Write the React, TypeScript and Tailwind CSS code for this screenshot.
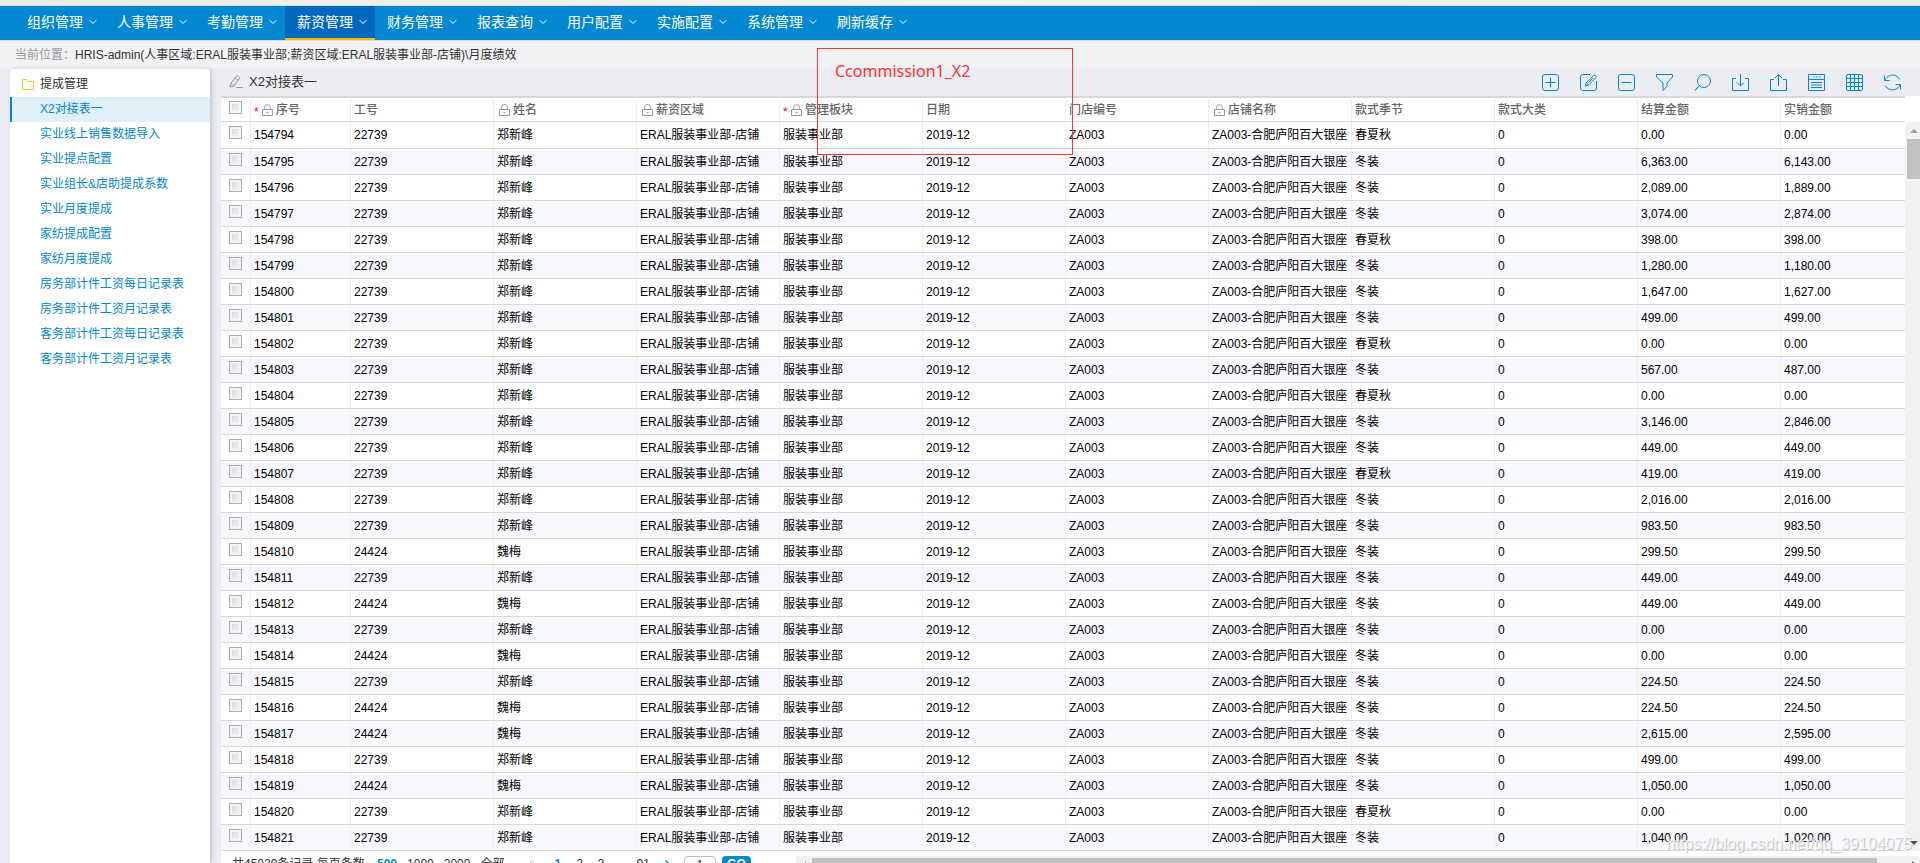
import React from 'react';
import { ChevronDown } from 'lucide-react';

const menus = ['组织管理', '人事管理', '考勤管理', '薪资管理', '财务管理', '报表查询', '用户配置', '实施配置', '系统管理', '刷新缓存'];

const sideItems = [
  'X2对接表一',
  '实业线上销售数据导入',
  '实业提点配置',
  '实业组长&店助提成系数',
  '实业月度提成',
  '家纺提成配置',
  '家纺月度提成',
  '房务部计件工资每日记录表',
  '房务部计件工资月记录表',
  '客务部计件工资每日记录表',
  '客务部计件工资月记录表',
];

const columns = [
  { title: '序号', required: true, locked: true },
  { title: '工号' },
  { title: '姓名', locked: true },
  { title: '薪资区域', locked: true },
  { title: '管理板块', required: true, locked: true },
  { title: '日期' },
  { title: '门店编号' },
  { title: '店铺名称', locked: true },
  { title: '款式季节' },
  { title: '款式大类' },
  { title: '结算金额' },
  { title: '实销金额' },
];

const people: Record<string, string> = { '22739': '郑新峰', '24424': '魏梅' };

// [工号, 款式季节, 结算金额, 实销金额]
const records = [
  ['22739', '春夏秋', '0.00', '0.00'],
  ['22739', '冬装', '6,363.00', '6,143.00'],
  ['22739', '冬装', '2,089.00', '1,889.00'],
  ['22739', '冬装', '3,074.00', '2,874.00'],
  ['22739', '春夏秋', '398.00', '398.00'],
  ['22739', '冬装', '1,280.00', '1,180.00'],
  ['22739', '冬装', '1,647.00', '1,627.00'],
  ['22739', '冬装', '499.00', '499.00'],
  ['22739', '春夏秋', '0.00', '0.00'],
  ['22739', '冬装', '567.00', '487.00'],
  ['22739', '春夏秋', '0.00', '0.00'],
  ['22739', '冬装', '3,146.00', '2,846.00'],
  ['22739', '冬装', '449.00', '449.00'],
  ['22739', '春夏秋', '419.00', '419.00'],
  ['22739', '冬装', '2,016.00', '2,016.00'],
  ['22739', '冬装', '983.50', '983.50'],
  ['24424', '冬装', '299.50', '299.50'],
  ['22739', '冬装', '449.00', '449.00'],
  ['24424', '冬装', '449.00', '449.00'],
  ['22739', '冬装', '0.00', '0.00'],
  ['24424', '冬装', '0.00', '0.00'],
  ['22739', '冬装', '224.50', '224.50'],
  ['24424', '冬装', '224.50', '224.50'],
  ['24424', '冬装', '2,615.00', '2,595.00'],
  ['22739', '冬装', '499.00', '499.00'],
  ['24424', '冬装', '1,050.00', '1,050.00'],
  ['22739', '春夏秋', '0.00', '0.00'],
  ['22739', '冬装', '1,040.00', '1,020.00'],
];

const tools = [
  { label: '新增', d: 'M3 .5h11a2.5 2.5 0 0 1 2.5 2.5v11a2.5 2.5 0 0 1-2.5 2.5H3A2.5 2.5 0 0 1 .5 14V3A2.5 2.5 0 0 1 3 .5zM8.5 3.5v10M3.5 8.5h10' },
  { label: '编辑', d: 'M10 .5H3A2.5 2.5 0 0 0 .5 3v11A2.5 2.5 0 0 0 3 16.5h11a2.5 2.5 0 0 0 2.5-2.5V7M5.5 12l.8-3.4 7.2-7.2q1.2-.9 2.2.1t.2 2.2l-7.2 7.2zM6.3 8.6l2.4 2.3M8.5 8.5l4.5-4.5' },
  { label: '删除', d: 'M3 .5h11a2.5 2.5 0 0 1 2.5 2.5v11a2.5 2.5 0 0 1-2.5 2.5H3A2.5 2.5 0 0 1 .5 14V3A2.5 2.5 0 0 1 3 .5zM3.5 8.5h10' },
  { label: '筛选', d: 'M.5 .5h16v2.500l-5.500 6v3.500l-4 4V9L.5 3z' },
  { label: '查询', d: 'M10 .5a6.500 6.500 0 1 1 0 13a6.500 6.500 0 0 1 0-13zM5.200 11.500L1 16.500M4.500 13L1.500 15.500' },
  { label: '导入', d: 'M4 4.500H.5v12h16v-12H13M8.500 0v12M5 8.500l3.500 3.500 3.500-3.500' },
  { label: '导出', d: 'M4 5.500H.5v11h16v-11H13M8.500 12V.5M5 4l3.500-3.500L12 4' },
  { label: '明细', d: 'M.5 .5h16v16H.5zM.5 5.500h16M3 8.500h11M3 11h11M3 13.500h11M5 3h1.500M8 3h1.500M11 3h1.500' },
  { label: '列表', d: 'M2 .5h13a1.500 1.500 0 0 1 1.500 1.500v13a1.500 1.500 0 0 1-1.500 1.500H2A1.500 1.500 0 0 1 .5 15V2A1.500 1.500 0 0 1 2 .5zM4.500 .5v16M8.500 .5v16M12.500 .5v16M.5 4.500h16M.5 8.500h16M.5 12.500h16' },
  { label: '刷新', d: 'M.5 1.500v5h5M.8 6.200C3 1.500 8 0 12 1.800q2.500 1.200 3.800 3.700M16.500 15.500v-5h-5M16.200 10.800C14 15.500 9 17 5 15.200Q2.500 14 1.200 11.500' },
];

const checkboxClass =
  'block size-[13px] appearance-none border border-[#acacac] bg-gradient-to-br from-[#d3d6da] to-[#f8f8f8] shadow-[inset_0_0_0_2px_#f4f4f4]';

function LockIcon() {
  return (
    <svg className="h-3 w-[11px] shrink-0" viewBox="0 0 11 12" fill="none" stroke="#999" aria-hidden="true">
      <path d="M.5 5.500h10v6H.5zM2.500 5.500V3.500q0-3 3-3t3 3v2M4.500 8.500h2" />
    </svg>
  );
}

function TopMenu() {
  return (
    <nav className="flex h-9 shrink-0 border-y border-[#d5dfe4] bg-[#0288d1] px-[15px]">
      {menus.map((name) => (
        <button
          key={name}
          className={`flex w-[90px] items-center gap-1 pl-3 text-sm whitespace-nowrap text-white ${
            name === '薪资管理' ? 'border-b-2 border-[#ffb900] bg-[#0068bf]' : 'pb-0.5'
          }`}
        >
          {name}
          <ChevronDown className="size-3 shrink-0" strokeWidth={2} />
        </button>
      ))}
    </nav>
  );
}

function Sidebar() {
  return (
    <aside className="mt-px w-[200px] shrink-0 rounded-t bg-white shadow-[2px_0_5px_#c4c6d2]">
      <h2 className="flex h-7 items-center gap-1.5 pt-0.5 pl-3 text-[#333]">
        <svg className="size-3" viewBox="0 0 12 12" fill="none" stroke="#fbc02d" aria-hidden="true">
          <path d="M.5 1.500h4l1.500 2h5.500v8H.5z" />
        </svg>
        提成管理
      </h2>
      <ul>
        {sideItems.map((item, i) => (
          <li key={item}>
            <a
              href="#"
              className={`flex h-[25px] items-center border-l-2 pb-0.5 pl-7 text-[#0288d1] ${
                i === 0 ? 'border-[#0288d1] bg-[#dff0f9]' : 'border-transparent'
              }`}
            >
              {item}
            </a>
          </li>
        ))}
      </ul>
    </aside>
  );
}

function Toolbar() {
  return (
    <div className="flex h-7 shrink-0 items-center justify-between pr-[19px] pl-2">
      <h1 className="flex items-center gap-1.5 text-[13px] text-[#333]">
        <svg className="h-[13px] w-3.5" viewBox="0 0 14 13" fill="none" stroke="#999" aria-hidden="true">
          <path d="M1 12l.8-3.500L7 1.500q1.500-1.500 2.800 0t.2 2.500l-5 7zM2 8.500l2.800 2.200M6 3l3 2M7 12.500h7" />
        </svg>
        X2对接表一
      </h1>
      <div className="flex gap-[21px]">
        {tools.map((tool) => (
          <button key={tool.label} aria-label={tool.label}>
            <svg className="size-[17px]" viewBox="0 0 17 17" fill="none" stroke="#0288d1">
              <path d={tool.d} />
            </svg>
          </button>
        ))}
      </div>
    </div>
  );
}

function Grid() {
  return (
    <div className="flex shrink-0 bg-white">
      <table className="flex-1 table-fixed border-separate border-spacing-0">
        <colgroup>
          <col className="w-[30px]" />
          <col className="w-[100px]" />
          {columns.slice(1, -1).map((col) => (
            <col key={col.title} className="w-[143px]" />
          ))}
          <col />
        </colgroup>
        <thead>
          <tr className="h-[26px] text-[#666]">
            <th className="border-t-2 border-r border-b border-t-[#d8d8d8] border-r-[#eee] border-b-[#d8d8d8] p-0 pt-[3px] pl-2 align-top">
              <input type="checkbox" aria-label="全选" className={checkboxClass} />
            </th>
            {columns.map((col) => (
              <th
                key={col.title}
                className="border-t-2 border-r border-b border-t-[#d8d8d8] border-r-[#eee] border-b-[#d8d8d8] p-0 pl-[3px] text-left font-medium last:border-r-0"
              >
                <span className={`flex items-center gap-[3px] ${col.locked && !col.required ? 'pl-0.5' : ''}`}>
                  {(col.required || col.locked) && (
                    <span className="flex items-center gap-0.5">
                      {col.required && <span className="h-3 w-1.5 leading-4 text-[#f00]">*</span>}
                      {col.locked && <LockIcon />}
                    </span>
                  )}
                  {col.title}
                </span>
              </th>
            ))}
          </tr>
        </thead>
        <tbody>
          {records.map(([jobNo, season, settled, sold], i) => {
            const id = String(154794 + i);
            const cells = [
              id, jobNo, people[jobNo], 'ERAL服装事业部-店铺', '服装事业部', '2019-12', 'ZA003',
              'ZA003-合肥庐阳百大银座', season, '0', settled, sold,
            ];
            return (
              <tr key={id} className="h-[26px] text-black first:h-[27px] even:bg-[#f7f8fd]">
                <td className="border-r border-b border-r-[#eee] border-b-[#d8d8d8] p-0 pt-1 pl-2 align-top">
                  <input type="checkbox" aria-label={`选择 ${id}`} className={checkboxClass} />
                </td>
                {cells.map((cell, c) => (
                  <td
                    key={c}
                    className="overflow-hidden border-r border-b border-r-[#eee] border-b-[#d8d8d8] p-0 pl-[3px] whitespace-nowrap last:border-r-0"
                  >
                    {cell}
                  </td>
                ))}
              </tr>
            );
          })}
        </tbody>
      </table>
      {/* vertical scrollbar */}
      <div className="flex w-[15px] shrink-0 flex-col pt-[26px]">
        <div className="flex flex-1 flex-col items-center bg-[#f1f1f1] pl-0.5">
          <svg className="mt-[7px] mb-1.5 h-1 w-2" viewBox="0 0 8 4" fill="#a3a3a3" aria-hidden="true"><path d="M0 4l4-4 4 4z" /></svg>
          <div className="h-10 w-full bg-[#c1c1c1]" />
          <svg className="mt-auto mb-1.5 h-1 w-2" viewBox="0 0 8 4" fill="#505050" aria-hidden="true"><path d="M0 0l4 4 4-4z" /></svg>
        </div>
      </div>
    </div>
  );
}

function Pager() {
  return (
    <footer className="flex h-7 shrink-0 items-start bg-white pt-[5px] leading-4 text-[#333]">
      <div className="flex w-[575px] shrink-0 items-start whitespace-nowrap">
        <span className="w-[156px] pl-[11px]">共45029条记录&nbsp;每页条数</span>
        <div className="flex gap-2.5">
          <a href="#" className="font-bold text-[#0288d1]">500</a>
          <a href="#">1000</a>
          <a href="#">2000</a>
          <a href="#">全部</a>
        </div>
        <div className="flex items-start gap-[15px] pl-6">
          <a href="#" aria-label="上一页" className="mr-1.5 pt-1">
            <svg className="h-2 w-[5px]" viewBox="0 0 5 8" fill="none" stroke="#aaa"><path d="M4.500 .5L1 4l3.500 3.500" /></svg>
          </a>
          <a href="#" className="font-bold text-[#0288d1]">1</a>
          <a href="#">2</a>
          <a href="#">3</a>
          <span className="-mr-2">...</span>
          <a href="#">91</a>
          <a href="#" aria-label="下一页" className="pt-1">
            <svg className="h-2 w-[5px]" viewBox="0 0 5 8" fill="none" stroke="#0288d1" strokeWidth="1.5"><path d="M.5 .5L4 4 .5 7.500" /></svg>
          </a>
        </div>
        <input aria-label="页码" defaultValue="1" className="ml-3.5 h-[18px] w-8 rounded-sm border border-[#bbb] bg-white text-center" />
        <button className="ml-1.5 h-[18px] w-[29px] rounded-sm bg-[#0288d1] pb-0.5 font-bold text-white">GO</button>
      </div>
      <div className="flex h-4 flex-1 items-center bg-[#f1f1f1] pt-0.5">
        <svg className="mx-1.5 h-2 w-1" viewBox="0 0 4 8" fill="#a3a3a3" aria-hidden="true"><path d="M4 0v8L0 4z" /></svg>
        <div className="h-full flex-1 bg-[#c1c1c1]" />
        <svg className="mr-1 ml-[35px] h-2 w-1" viewBox="0 0 4 8" fill="#505050" aria-hidden="true"><path d="M0 0v8l4-4z" /></svg>
      </div>
    </footer>
  );
}

export default function App() {
  return (
    <div className="relative flex h-screen flex-col overflow-hidden bg-[#ecedf2] font-['Liberation_Sans','Noto_Sans_CJK_SC',sans-serif] text-xs">
      <div className="h-[5px] shrink-0 bg-gradient-to-r from-[#ebebeb] via-[#f5f5f5] to-[#ececec]" />
      <TopMenu />
      <div className="flex h-[27px] shrink-0 items-center bg-[#f2f2f4] pl-[15px] text-[#333]">
        <span className="text-[#999]">当前位置：</span>
        <span>HRIS-admin(人事区域:ERAL服装事业部;薪资区域:ERAL服装事业部-店铺)\月度绩效</span>
      </div>
      <div className="flex min-h-0 flex-1 gap-[11px] pl-2.5">
        <Sidebar />
        <main className="flex min-w-0 flex-1 flex-col overflow-hidden">
          <Toolbar />
          <Grid />
          <Pager />
        </main>
      </div>

      {/* annotation over the page */}
      <div className="absolute top-12 left-[817px] h-[107px] w-64 border border-[#f33] pt-2.5 pl-[17px] font-['Noto_Sans',sans-serif] text-base text-[#f33]">
        Ccommission1_X2
      </div>
      <div className="absolute right-2 bottom-[7px] text-base text-white/70 [text-shadow:1px_1px_1px_#bbb]">
        https://blog.csdn.net/qq_39104075
      </div>
    </div>
  );
}
